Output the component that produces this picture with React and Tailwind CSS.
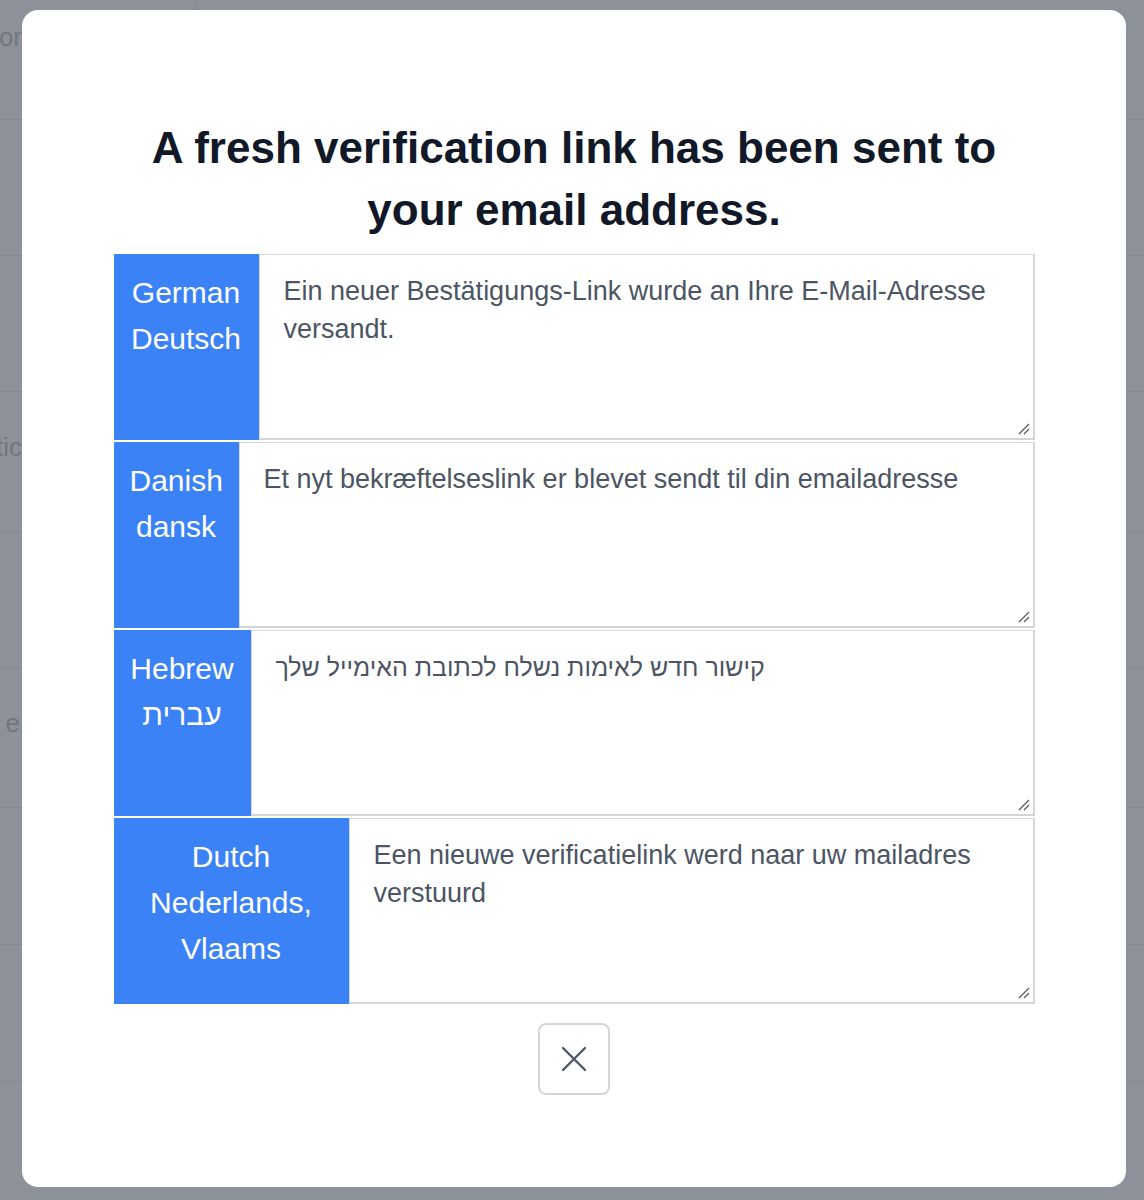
import React from 'react';

const rows = [
    {
        label: ['German', 'Deutsch'],
        width: 'w-[145px]',
        size: 'text-[27px]',
        text: 'Ein neuer Bestätigungs-Link wurde an Ihre E-Mail-Adresse versandt.',
    },
    {
        label: ['Danish', 'dansk'],
        width: 'w-[125px]',
        size: 'text-[27px]',
        text: 'Et nyt bekræftelseslink er blevet sendt til din emailadresse',
    },
    {
        label: ['Hebrew', 'עברית'],
        width: 'w-[137px]',
        size: 'text-[25px]',
        text: 'קישור חדש לאימות נשלח לכתובת האימייל שלך',
    },
    {
        label: ['Dutch', 'Nederlands,', 'Vlaams'],
        width: 'w-[235px]',
        size: 'text-[27px]',
        text: 'Een nieuwe verificatielink werd naar uw mailadres verstuurd',
    },
];

// faint page rows sitting behind the backdrop
const pageRows = [
    { h: 'h-[120px]', tail: 'Informatior', at: 'pt-[18px]' },
    { h: 'h-[136px]', tail: '' },
    { h: 'h-[136px]', tail: '' },
    { h: 'h-[140px]', tail: 'Verificatic', at: 'pt-[36px]' },
    { h: 'h-[136px]', tail: '' },
    { h: 'h-[140px]', tail: 'Enter your e', at: 'pt-[36px] text-[22px] tracking-[2px]' },
    { h: 'h-[137px]', tail: '' },
    { h: 'h-[137px]', tail: '' },
    { h: 'h-[137px]', tail: '' },
];

function LanguageRow({ row }) {
    return (
        <div className="flex h-[186px]">
            <div className={`${row.width} shrink-0 bg-[#3b82f6] px-4 pt-4 text-center text-[30px] leading-[46px] text-white`}>
                {row.label.map((line) => (
                    <div key={line}>{line}</div>
                ))}
            </div>
            <div className="relative flex-1">
                <textarea
                    readOnly
                    defaultValue={row.text}
                    className={`h-full w-full resize-none border-t border-l border-r-2 border-b-2 border-[#d3d6db] bg-white px-[24px] pt-[17px] ${row.size} leading-[38px] text-[#4b5563] outline-none`}
                />
                {/* resize grip */}
                <svg className="pointer-events-none absolute bottom-[5px] right-[5px]" width="13" height="13" viewBox="0 0 13 13" fill="none" stroke="#555" strokeWidth="1.2">
                    <path d="M12 2 2 12M12 7 7 12" />
                </svg>
            </div>
        </div>
    );
}

export default function App() {
    return (
        <div className="relative h-[1200px] w-full overflow-hidden bg-[#8d9199] font-['Liberation_Sans',Arial,sans-serif]">
            {/* Page behind the backdrop */}
            <div className="flex flex-col">
                {pageRows.map((r, i) => (
                    <div key={i} className={`${r.h} flex border-b border-[#848890]`}>
                        <div className={`flex w-[22px] justify-end overflow-hidden whitespace-nowrap text-[26px] text-[#72767e] ${r.at || ''}`}>
                            {r.tail}
                        </div>
                        {i === 0 && <div className="ml-[173px] h-[10px] border-l border-[#848890]" />}
                    </div>
                ))}
            </div>

            {/* Modal */}
            <div className="absolute left-[22px] top-[10px] flex h-[1177px] w-[1104px] flex-col items-center rounded-2xl bg-white pt-[107px]">
                <h1 className="w-[880px] text-center text-[44px] font-bold leading-[62px] text-[#111827]">
                    A fresh verification link has been sent to your email address.
                </h1>

                <div className="mt-[13px] flex w-[921px] flex-col gap-[2px]">
                    {rows.map((row) => (
                        <LanguageRow key={row.label[0]} row={row} />
                    ))}
                </div>

                <button
                    type="button"
                    className="mt-[19px] flex h-[72px] w-[72px] items-center justify-center rounded-lg border-2 border-[#d4d6da] bg-white"
                >
                    <svg width="26" height="26" viewBox="0 0 26 26" fill="none" stroke="#4b5563" strokeWidth="2.3" strokeLinecap="round">
                        <path d="M2 2 24 24M24 2 2 24" />
                    </svg>
                </button>
            </div>
        </div>
    );
}
